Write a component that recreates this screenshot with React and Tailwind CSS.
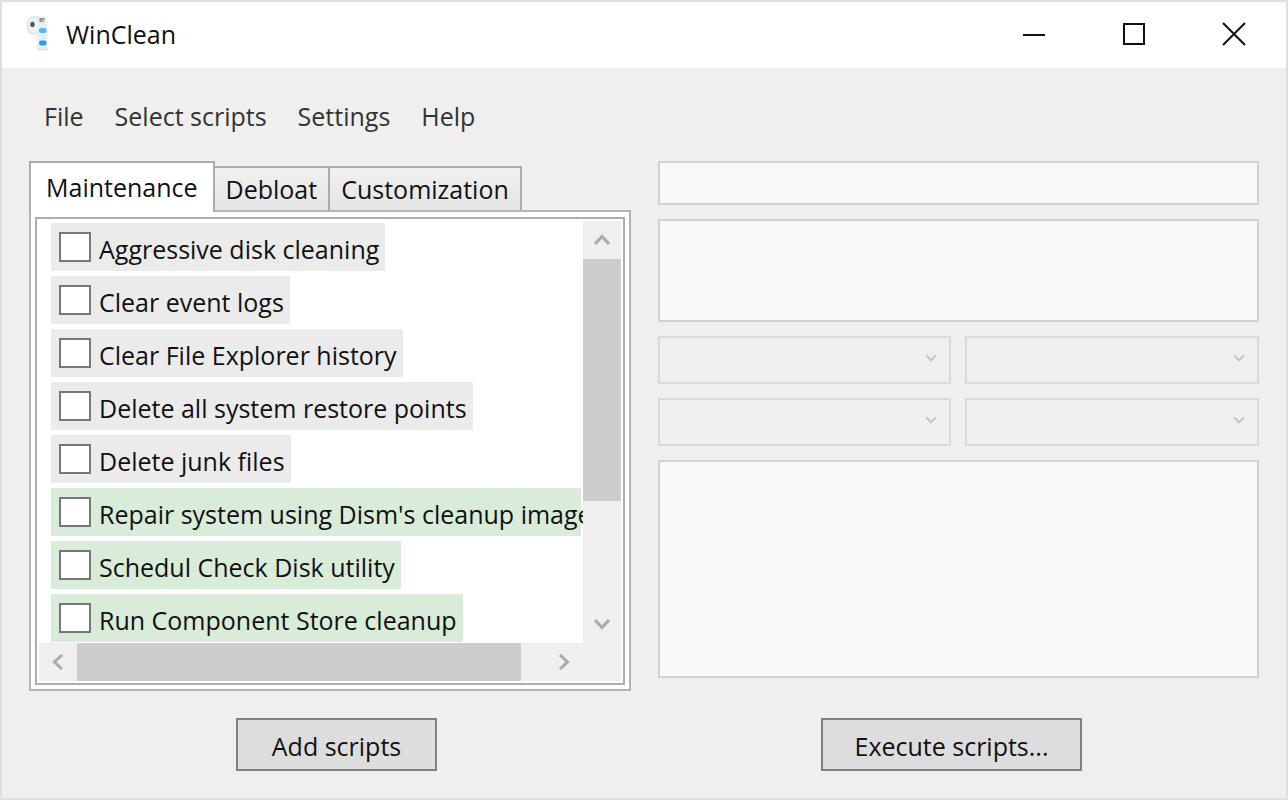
import { useState } from "react";

const tabs = ["Maintenance", "Debloat", "Customization"];

const scripts = [
  { name: "Aggressive disk cleaning", safe: false },
  { name: "Clear event logs", safe: false },
  { name: "Clear File Explorer history", safe: false },
  { name: "Delete all system restore points", safe: false },
  { name: "Delete junk files", safe: false },
  { name: "Repair system using Dism's cleanup image", safe: true },
  { name: "Schedul Check Disk utility", safe: true },
  { name: "Run Component Store cleanup", safe: true },
];

function Logo() {
  return (
    <svg viewBox="0 0 24 38" className="h-[38px] w-6" aria-hidden="true">
      <rect x="1" y="1" width="14" height="19" rx="6" fill="#dfe8ed" />
      <rect x="2.5" y="2.5" width="12" height="15" rx="5" fill="#edf3f6" />
      <rect x="11" y="1" width="10.5" height="34" rx="2" fill="#e2f2fb" />
      <path d="M11.5 34.5h10" stroke="#d9dfe3" strokeWidth="1.5" />
      <ellipse cx="6.500" cy="9.500" rx="2.2" ry="2.8" fill="#5b554f" />
      <rect x="13.500" y="3" width="2.5" height="2.2" fill="#e2694a" />
      <rect x="16" y="3" width="2.5" height="2.2" fill="#8fb04a" />
      <rect x="13.500" y="5.200" width="2.500" height="2" fill="#6f9fc0" />
      <rect x="16" y="5.200" width="2.500" height="2" fill="#e8b84a" />
      <rect x="13" y="13" width="7.5" height="5" rx="2" fill="#5fb2f0" />
      <rect x="13" y="25.500" width="7.5" height="5" rx="2" fill="#3a98e4" />
    </svg>
  );
}

function Chevron({ className }) {
  return (
    <svg viewBox="0 0 16 12" className={className} fill="none" stroke="currentColor" strokeWidth="3" aria-hidden="true">
      <path d="M1 10 8 2.500l7 7.500" />
    </svg>
  );
}

function ScriptRow({ name, safe }) {
  return (
    <label
      className={`flex h-12 w-fit max-w-full shrink-0 items-center gap-2 whitespace-nowrap pl-2 pr-1.5 ${
        safe ? "bg-[#d9ebd9]" : "bg-[#ebebeb]"
      }`}
    >
      <input type="checkbox" className="h-[30px] w-8 shrink-0 appearance-none border-2 border-[#777] bg-white checked:bg-[#777]" />
      <span className="pt-1">{name}</span>
    </label>
  );
}

function Picker({ label }) {
  return (
    <div className="relative">
      <select disabled aria-label={label} className="block h-12 w-full appearance-none border-2 border-[#dadada] bg-[#efefef] px-3" />
      <Chevron className="pointer-events-none absolute right-3.5 top-[18px] h-2 w-3 rotate-180 text-[#c2c2c2]" />
    </div>
  );
}

export default function App() {
  const [active, setActive] = useState("Maintenance");
  return (
    <div className="flex h-screen flex-col border-2 border-[#dfdfdf] bg-[#efefef] font-['Open_Sans','Noto_Sans',sans-serif] text-[25px] leading-8 text-[#111]">
      <header className="flex h-[66px] shrink-0 items-center bg-white pb-0.5 pl-6 pr-0.5">
        <Logo />
        <h1 className="flex-1 pl-4">WinClean</h1>
        <button aria-label="Minimize" className="flex h-full w-[100px] items-center justify-center">
          <svg className="size-6" viewBox="0 0 24 24" stroke="#111" strokeWidth="2"><path d="M1 13h22" /></svg>
        </button>
        <button aria-label="Maximize" className="flex h-full w-[100px] items-center justify-center">
          <svg className="size-6" viewBox="0 0 24 24" fill="none" stroke="#111" strokeWidth="2"><path d="M2 2h20v20H2z" /></svg>
        </button>
        <button aria-label="Close" className="flex h-full w-[100px] items-center justify-center">
          <svg className="size-6" viewBox="0 0 24 24" stroke="#111" strokeWidth="2"><path d="m1 1 22 22M23 1 1 23" /></svg>
        </button>
      </header>

      <nav className="flex shrink-0 gap-[31px] px-[42px] pt-8 text-[#333]">
        <button>File</button>
        <button>Select scripts</button>
        <button>Settings</button>
        <button>Help</button>
      </nav>

      <main className="grid min-h-0 flex-1 grid-cols-2 gap-[27px] px-[27px] pt-[29px]">
        <section className="flex min-h-0 min-w-0 flex-col">
          <div role="tablist" className="flex items-end">
            {tabs.map((tab) => (
              <button
                key={tab}
                role="tab"
                aria-selected={tab === active}
                onClick={() => setActive(tab)}
                className={
                  tab === active
                    ? "relative z-10 -mb-0.5 h-[51px] border-2 border-b-0 border-[#acacac] bg-white px-[15px] pb-0.5"
                    : "h-11 border-2 border-b-0 border-l-0 border-[#acacac] bg-linear-to-b from-[#f0f0f0] to-[#e5e5e5] px-[11px]"
                }
              >
                {tab}
              </button>
            ))}
          </div>
          <div role="tabpanel" aria-label={active} className="min-h-0 flex-1 border-2 border-[#b4b4b4] bg-white px-1 pb-1 pt-[5px]">
            <div className="grid h-full grid-cols-[minmax(0,1fr)_38px] grid-rows-[minmax(0,1fr)_38px] border-2 border-[#abadb3] p-0.5">
              <div className="flex flex-col gap-[5px] overflow-auto pl-3 pr-0.5 pt-0.5 [scrollbar-width:none]">
                {scripts.map((script) => (
                  <ScriptRow key={script.name} {...script} />
                ))}
              </div>
              <div className="flex flex-col bg-[#efefef]">
                <button aria-label="Scroll up" className="flex h-[38px] items-center justify-center">
                  <Chevron className="h-3 w-4 text-[#aaa]" />
                </button>
                <div className="flex-1"><div className="h-[70%] bg-[#cdcdcd]" /></div>
                <button aria-label="Scroll down" className="flex h-[38px] items-center justify-center">
                  <Chevron className="h-3 w-4 rotate-180 text-[#aaa]" />
                </button>
              </div>
              <div className="flex bg-[#efefef]">
                <button aria-label="Scroll left" className="flex w-[38px] items-center justify-center">
                  <Chevron className="h-3 w-4 -rotate-90 text-[#aaa]" />
                </button>
                <div className="flex-1"><div className="h-full w-[95%] bg-[#cdcdcd]" /></div>
                <button aria-label="Scroll right" className="flex w-[38px] items-center justify-center">
                  <Chevron className="h-3 w-4 rotate-90 text-[#aaa]" />
                </button>
              </div>
              <div className="bg-[#efefef]" />
            </div>
          </div>
        </section>

        <section className="flex min-h-0 min-w-0 flex-col gap-3.5 pb-[13px]">
          <input disabled aria-label="Name" className="h-11 w-full border-2 border-[#cfd1d4] bg-[#f8f8f8] px-2" />
          <textarea disabled aria-label="Description" className="block h-[103px] w-full resize-none border-2 border-[#cfd1d4] bg-[#f8f8f8] px-2" />
          <div className="grid grid-cols-2 gap-3.5">
            <Picker label="Category" />
            <Picker label="Recommended" />
            <Picker label="Host" />
            <Picker label="Impact" />
          </div>
          <textarea disabled aria-label="Code" className="block min-h-0 w-full flex-1 resize-none border-2 border-[#cfd1d4] bg-[#f8f8f8] px-2" />
        </section>
      </main>

      <footer className="grid shrink-0 grid-cols-2 justify-items-center px-[27px] pb-[27px] pt-[27px]">
        <button className="h-[53px] w-[201px] border-2 border-[#808080] bg-[#dddddd] pt-0.5">Add scripts</button>
        <button className="h-[53px] w-[261px] border-2 border-[#808080] bg-[#dddddd] pt-0.5">Execute scripts...</button>
      </footer>
    </div>
  );
}
